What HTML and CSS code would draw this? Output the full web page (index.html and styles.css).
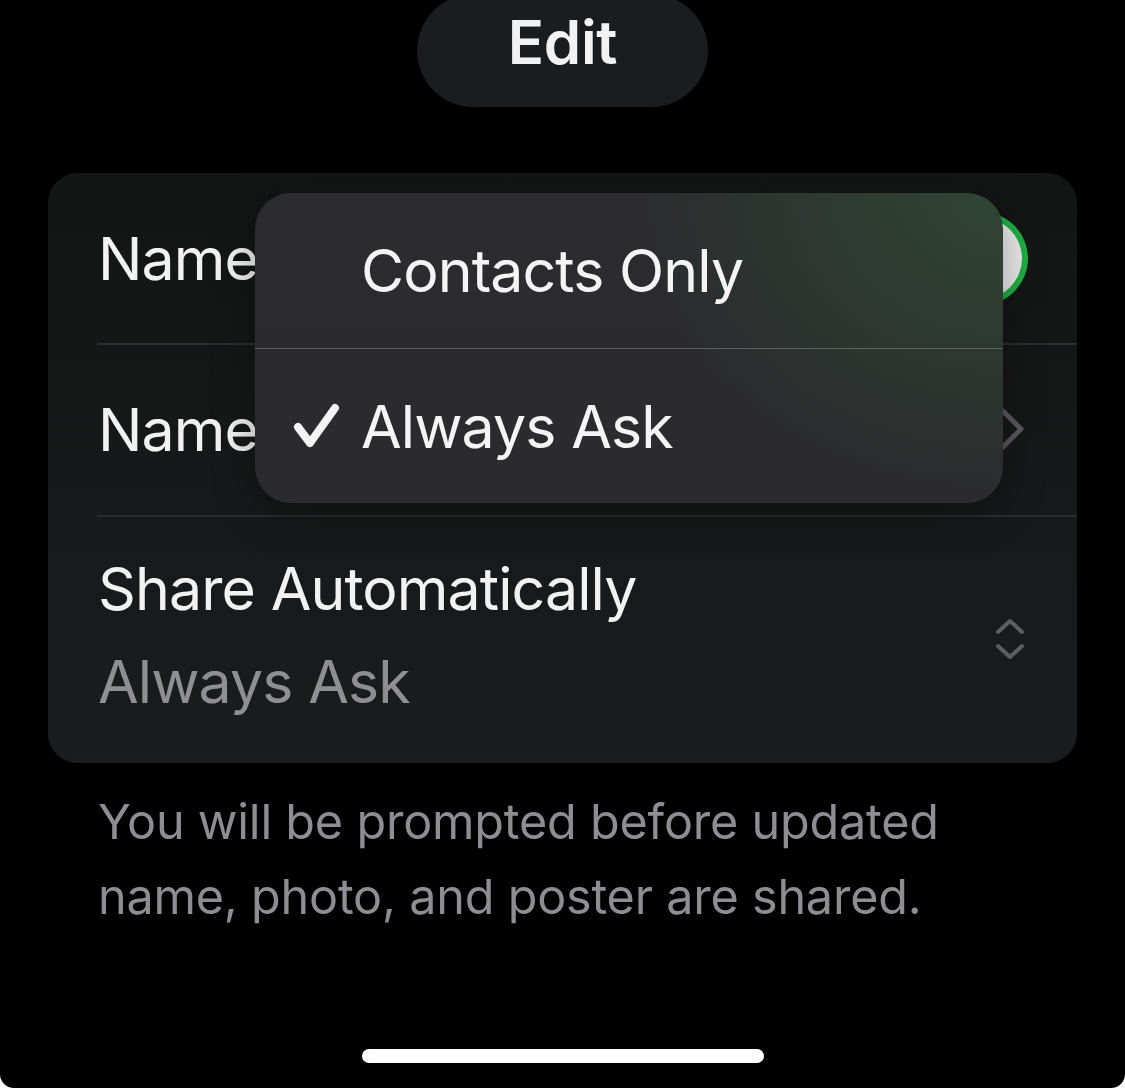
FILE: index.html
```html
<!DOCTYPE html>
<html lang="en">
<head>
  <meta charset="UTF-8" />
  <meta name="viewport" content="width=device-width, initial-scale=1.0"/>
  <title>Edit – Name &amp; Photo Sharing</title>
  <link rel="stylesheet" href="styles.css">
</head>
<body>
  <div class="screen">
    <div class="edit-pill">Edit</div>

    <div class="card">
      <div class="row row-toggle">
        <span class="row-title">Name &amp; Photo Sharing</span>
        <div class="switch on"><div class="knob"></div></div>
      </div>

      <div class="row row-link">
        <span class="row-title">Name &amp; Photo</span>
        <svg class="chevron" width="26" height="44" viewBox="0 0 26 44">
          <path d="M4 4 L22 22 L4 40" fill="none" stroke="#58585d" stroke-width="5" stroke-linecap="round" stroke-linejoin="round"/>
        </svg>
      </div>

      <div class="row row-select">
        <div class="select-text">
          <span class="row-title">Share Automatically</span>
          <span class="row-value">Always Ask</span>
        </div>
        <svg class="updown" width="30" height="42" viewBox="0 0 30 42">
          <path d="M3 14 L15 3 L27 14" fill="none" stroke="#5d5d62" stroke-width="4" stroke-linecap="round" stroke-linejoin="round"/>
          <path d="M3 28 L15 39 L27 28" fill="none" stroke="#5d5d62" stroke-width="4" stroke-linecap="round" stroke-linejoin="round"/>
        </svg>
      </div>

      <!-- popup menu over the rows -->
      <div class="menu">
        <div class="menu-item">
          <span class="check"></span>
          <span>Contacts Only</span>
        </div>
        <div class="menu-item selected">
          <span class="check">
            <svg width="48" height="46" viewBox="0 0 48 46">
              <path d="M5 24 L17 40 L42 5" fill="none" stroke="#f4f4f4" stroke-width="8" stroke-linecap="round" stroke-linejoin="round"/>
            </svg>
          </span>
          <span>Always Ask</span>
        </div>
      </div>
    </div>

    <p class="footer-note">You will be prompted before updated name, photo, and poster are shared.</p>

    <div class="home-bar"></div>
  </div>
</body>
</html>
```

FILE: styles.css
```css
body {
  margin: 0;
  padding: 0;
  background: #fff;
  font-family: 'Inter', 'Liberation Sans', sans-serif;
}
.screen {
  width: 1125px;
  height: 1088px;
  background: #000;
  border-radius: 0 0 14px 14px;
  overflow: hidden;
  display: flex;
  flex-direction: column;
  align-items: center;
  color: #f2f2f2;
}
.edit-pill {
  margin-top: -6px;
  width: 291px;
  height: 113px;
  border-radius: 57px;
  background: #1b1c1d;
  display: flex;
  align-items: center;
  justify-content: center;
  font-size: 60px;
  font-weight: 600;
  letter-spacing: -0.3px;
  padding-bottom: 18px;
  box-sizing: border-box;
}
.card {
  position: relative;
  margin-top: 66px;
  width: 1029px;
  border-radius: 30px;
  background: linear-gradient(180deg, #131414 0%, #1b1c1d 100%);
}
.row {
  display: flex;
  align-items: center;
  justify-content: space-between;
  padding: 0 49px 0 50px;
  position: relative;
}
.row + .row::before {
  content: '';
  position: absolute;
  top: 0;
  left: 49px;
  right: 0;
  height: 1.5px;
  background: #2b2c2d;
}
.row-toggle { height: 170px; }
.row-link { height: 172px; }
.row-select { height: 248px; }
.row-title {
  font-size: 59px;
  letter-spacing: -0.9px;
  color: #f2f2f2;
  white-space: nowrap;
}
.select-text {
  display: flex;
  flex-direction: column;
  gap: 22px;
  padding-bottom: 8px;
}
.row-value {
  font-size: 59px;
  letter-spacing: -0.9px;
  color: #8e8e93;
}
.chevron { margin-right: 3px; }
.updown { margin-right: 3px; }
.switch {
  width: 153px;
  height: 93px;
  border-radius: 47px;
  background: #1fb043;
  position: relative;
  flex-shrink: 0;
}
.switch .knob {
  position: absolute;
  top: 6px;
  right: 6px;
  width: 81px;
  height: 81px;
  border-radius: 50%;
  background: #ebebeb;
}
.menu {
  position: absolute;
  left: 207px;
  top: 20px;
  width: 748px;
  height: 310px;
  border-radius: 36px;
  overflow: hidden;
  background:
    radial-gradient(ellipse 360px 300px at 100% 0%, rgba(48, 72, 54, 0.9), rgba(48, 72, 54, 0) 100%),
    linear-gradient(180deg, #2c2c2e 0%, #2b2b2d 100%);
  box-shadow: 0 10px 40px rgba(0,0,0,0.35);
}
.menu-item {
  height: 155px;
  display: flex;
  align-items: center;
  font-size: 59px;
  letter-spacing: -0.9px;
  color: #f4f4f4;
  box-sizing: border-box;
}
.menu-item + .menu-item {
  border-top: 1.5px solid #616163;
}
.check {
  width: 106px;
  display: flex;
  justify-content: flex-end;
  padding-right: 20px;
  box-sizing: border-box;
  flex-shrink: 0;
}
.footer-note {
  margin: 21px 0 0;
  width: 1029px;
  padding: 0 50px;
  box-sizing: border-box;
  font-size: 48.5px;
  line-height: 75px;
  color: #8d8d92;
  letter-spacing: -0.2px;
}
.home-bar {
  margin-top: auto;
  margin-bottom: 25px;
  width: 402px;
  height: 14px;
  border-radius: 7px;
  background: #fff;
}
```
